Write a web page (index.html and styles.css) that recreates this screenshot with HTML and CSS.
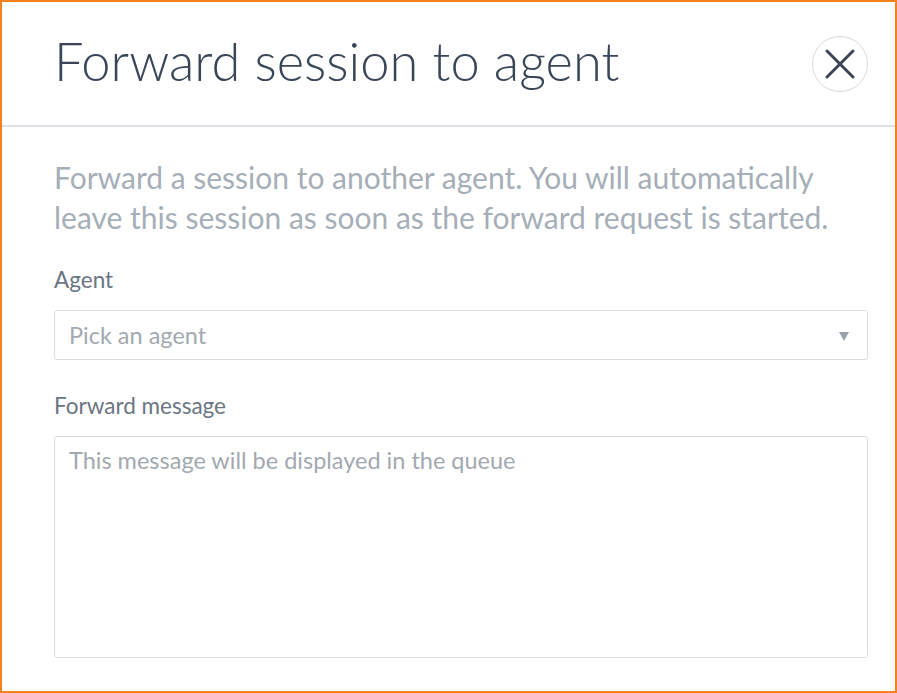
FILE: index.html
```html
<!DOCTYPE html>
<html>
<head>
<meta charset="utf-8">
<link rel="stylesheet" href="styles.css">
</head>
<body>
<div class="modal">
  <header class="modal-header">
    <h1 class="title">Forward session to agent</h1>
    <button class="close" aria-label="Close">
      <svg width="30" height="30" viewBox="0 0 30 30"><path d="M2 2 L28 28 M28 2 L2 28" stroke="#3b4556" stroke-width="3" stroke-linecap="round" fill="none"/></svg>
    </button>
  </header>
  <div class="modal-body">
    <p class="desc">Forward a session to another agent. You will automatically leave this session as soon as the forward request is started.</p>
    <label class="label">Agent</label>
    <div class="select">
      <span class="placeholder">Pick an agent</span>
      <span class="arrow"></span>
    </div>
    <label class="label label-msg">Forward message</label>
    <div class="textarea"><span class="placeholder">This message will be displayed in the queue</span></div>
  </div>
</div>
</body>
</html>
```
FILE: styles.css
```css
html, body { margin: 0; padding: 0; }
body { width: 897px; height: 693px; overflow: hidden; background: #fff; font-family: Lato, "Open Sans", sans-serif; }
.modal { box-sizing: border-box; width: 897px; height: 693px; border: 2px solid #f5821f; background: #fff; }
.modal-header { height: 123px; border-bottom: 2px solid #dde1e5; display: flex; align-items: center; justify-content: space-between; padding: 0 27px 0 52px; box-sizing: content-box; }
.title { margin: -6px 0 0 0; font-weight: 300; font-size: 52.4px; line-height: 60px; color: #3a4658; letter-spacing: 0; }
.close { width: 56px; height: 56px; border-radius: 50%; border: 1.5px solid #d3d9de; background: #fff; display: flex; align-items: center; justify-content: center; padding: 0; margin-top: 0; }
.modal-body { padding: 30px 27px 0 52px; }
.desc { margin: 0; font-size: 30px; line-height: 40px; color: #a6aeb8; }
.label { display: block; font-size: 22.5px; line-height: 28px; color: #6b7584; margin-top: 29px; }
.label-msg { margin-top: 32px; }
.select { margin-top: 16px; height: 50px; box-sizing: border-box; border: 1.5px solid #d9dde2; border-radius: 3px; display: flex; align-items: center; justify-content: space-between; padding: 0 18px 0 14px; }
.placeholder { font-size: 23.5px; color: #a3a9b1; }
.arrow { width: 0; height: 0; border-left: 5px solid transparent; border-right: 5px solid transparent; border-top: 9px solid #9aa1ab; margin-top: 2px; }
.textarea { margin-top: 16px; height: 222px; border: 1.5px solid #d9dde2; border-radius: 3px; padding: 9px 14px; box-sizing: border-box; }
```
